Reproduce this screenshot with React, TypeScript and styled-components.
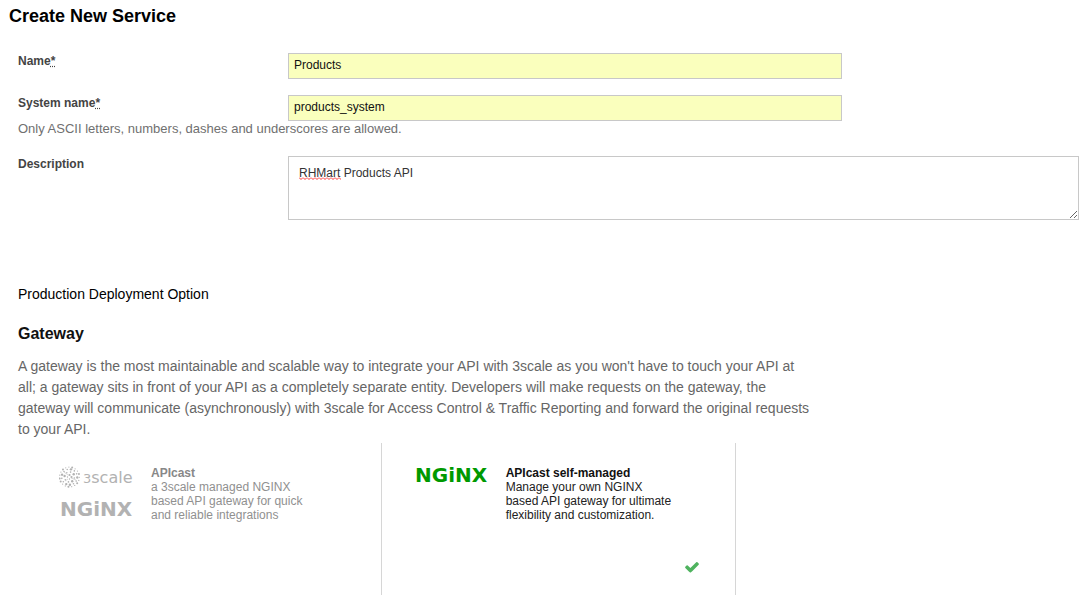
import React, { useState } from 'react';
import styled, { createGlobalStyle } from 'styled-components';

const GlobalStyle = createGlobalStyle`
  *, *::before, *::after { box-sizing: border-box; }
  body {
    margin: 0;
    background: #fff;
    color: #111;
    font-family: "Liberation Sans", Arial, Helvetica, sans-serif;
    font-size: 12px;
  }
`;

const Page = styled.main`
  padding: 4px 4px 20px 0;
`;

const Title = styled.h1`
  margin: 0 0 25px;
  padding-left: 9px;
  font-size: 18px;
  line-height: 24px;
  color: #000;
`;

const Form = styled.form`
  padding-left: 18px;
`;

const Field = styled.div<{ $gap: number }>`
  display: grid;
  grid-template-columns: 270px 1fr;
  align-items: start;
  margin-bottom: ${(p) => p.$gap}px;
`;

const FieldLabel = styled.label`
  font-weight: bold;
  line-height: 16px;
  color: #444;
`;

const Required = styled.abbr`
  text-decoration: underline dotted;
`;

const TextInput = styled.input`
  width: 70%;
  height: 26px;
  padding: 0 5px 2px;
  border: 1px solid #c8c8c8;
  border-radius: 0;
  background: #faffbd;
  color: #111;
  font: 12px "Liberation Sans", Arial, sans-serif;
`;

const Hint = styled.p`
  grid-column: 1 / -1;
  margin: 0;
  font-size: 13px;
  line-height: 16px;
  color: #707070;
`;

const AreaWrap = styled.div`
  position: relative;
`;

const TextArea = styled.textarea`
  display: block;
  width: 100%;
  height: 64px;
  padding: 8px 10px;
  border: 1px solid #c8c8c8;
  background: #fff;
  color: #333;
  font: 12px/16px "Liberation Sans", Arial, sans-serif;
  resize: vertical;
`;

const Squiggle = styled.svg`
  position: absolute;
  left: 11px;
  top: 21px;
  pointer-events: none;
`;

const Legend = styled.h2`
  margin: 0 0 20px;
  font-size: 14px;
  font-weight: normal;
  line-height: 20px;
  color: #000;
`;

const GroupTitle = styled.h3`
  margin: 0 0 12px;
  font-size: 16px;
  line-height: 20px;
`;

const Intro = styled.p`
  width: 75%;
  margin: 0 0 3px;
  font-size: 14px;
  line-height: 21px;
  color: #666;
`;

const Options = styled.div`
  display: grid;
  grid-template-columns: repeat(2, calc((100% + 12px) / 3));
  margin-left: 9px;
`;

const Option = styled.label`
  position: relative;
  display: grid;
  grid-template-columns: 76px 170px;
  column-gap: 16px;
  align-items: start;
  min-height: 152px;
  padding: 23px 0 0 32px;
  border-right: 1px solid #d6d6d6;
  cursor: pointer;
`;

const OptionRadio = styled.input`
  position: absolute;
  width: 1px;
  height: 1px;
  margin: 0;
  opacity: 0;
`;

const Logos = styled.span<{ $on: boolean }>`
  display: flex;
  flex-direction: column;
  gap: 12px;
  color: ${(p) => (p.$on ? '#009900' : '#b2b2b2')};
`;

const Wordmark = styled.svg`
  margin-top: -3px;
`;

const OptionText = styled.span<{ $on: boolean }>`
  line-height: 14px;
  color: ${(p) => (p.$on ? '#222' : '#909090')};

  strong {
    display: block;
    color: ${(p) => (p.$on ? '#111' : '#888')};
  }
`;

const Tick = styled.svg`
  position: absolute;
  right: 35px;
  bottom: 20px;
  width: 16px;
  height: 16px;
  fill: #4fb35f;
`;

const rings = [
  { radius: 2, count: 4, size: 0.7 },
  { radius: 5, count: 8, size: 0.8 },
  { radius: 7.8, count: 13, size: 0.8 },
  { radius: 9.9, count: 19, size: 0.6 },
];

function ThreeScaleLogo() {
  return (
    <svg width="76" height="22" viewBox="0 0 76 22" fill="currentColor" role="img" aria-label="3scale">
      {rings.map((ring, r) =>
        Array.from({ length: ring.count }, (_, i) => {
          const a = (i / ring.count) * Math.PI * 2 + r;
          return (
            <circle
              key={`${r}-${i}`}
              cx={10.5 + Math.cos(a) * ring.radius}
              cy={11 + Math.sin(a) * ring.radius}
              r={ring.size + (i % 3 === 0 ? 0.4 : 0)}
            />
          );
        }),
      )}
      <path d="M5 6L9 9M12 12L17 14M6 15L9 13" fill="none" stroke="currentColor" strokeWidth="0.5" />
      <text x="24" y="17" fontFamily="DejaVu Sans, sans-serif" fontSize="16">
        <tspan fontSize="13">3</tspan>scale
      </text>
    </svg>
  );
}

function NginxLogo() {
  return (
    <Wordmark width="76" height="24" viewBox="0 0 76 24" fill="currentColor" role="img" aria-label="NGINX">
      <text x="1" y="19" fontFamily="DejaVu Sans, sans-serif" fontWeight="bold" fontSize="20">
        NGiNX
      </text>
    </Wordmark>
  );
}

function CheckMark() {
  return (
    <Tick viewBox="0 0 1792 1792" aria-hidden="true">
      <path d="M1671 566q0 40-28 68l-724 724-136 136q-28 28-68 28t-68-28l-136-136-362-362q-28-28-28-68t28-68l136-136q28-28 68-28t68 28l294 295 656-657q28-28 68-28t68 28l136 136q28 28 28 68z" />
    </Tick>
  );
}

type Deployment = 'hosted' | 'self_managed';

export default function App() {
  const [deployment, setDeployment] = useState<Deployment>('self_managed');
  const hosted = deployment === 'hosted';

  return (
    <>
      <GlobalStyle />
      <Page>
        <Title>Create New Service</Title>
        <Form onSubmit={(e) => e.preventDefault()}>
          <Field $gap={16}>
            <FieldLabel htmlFor="name">
              Name<Required title="required">*</Required>
            </FieldLabel>
            <TextInput id="name" type="text" defaultValue="Products" required />
          </Field>
          <Field $gap={19}>
            <FieldLabel htmlFor="system">
              System name<Required title="required">*</Required>
            </FieldLabel>
            <TextInput id="system" type="text" defaultValue="products_system" required />
            <Hint>Only ASCII letters, numbers, dashes and underscores are allowed.</Hint>
          </Field>
          <Field $gap={64}>
            <FieldLabel htmlFor="description">Description</FieldLabel>
            <AreaWrap>
              <TextArea id="description" defaultValue="RHMart Products API" />
              <Squiggle width="42" height="3" aria-hidden="true">
                <defs>
                  <pattern id="wave" width="4" height="3" patternUnits="userSpaceOnUse">
                    <path d="M-1 0.5L0 0.5L2 2.5L4 0.5" stroke="#f33" fill="none" />
                  </pattern>
                </defs>
                <rect width="42" height="3" fill="url(#wave)" />
              </Squiggle>
            </AreaWrap>
          </Field>

          <Legend>Production Deployment Option</Legend>
          <GroupTitle>Gateway</GroupTitle>
          <Intro>
            A gateway is the most maintainable and scalable way to integrate your API with 3scale as you won't have to
            touch your API at all; a gateway sits in front of your API as a completely separate entity. Developers will
            make requests on the gateway, the gateway will communicate (asynchronously) with 3scale for Access Control
            &amp; Traffic Reporting and forward the original requests to your API.
          </Intro>
          <Options role="radiogroup" aria-label="Gateway">
            <Option>
              <OptionRadio type="radio" name="deployment" checked={hosted} onChange={() => setDeployment('hosted')} />
              <Logos $on={hosted}>
                <ThreeScaleLogo />
                <NginxLogo />
              </Logos>
              <OptionText $on={hosted}>
                <strong>APIcast</strong>a 3scale managed NGINX
                <br />
                based API gateway for quick
                <br />
                and reliable integrations
              </OptionText>
              {hosted && <CheckMark />}
            </Option>
            <Option>
              <OptionRadio
                type="radio"
                name="deployment"
                checked={!hosted}
                onChange={() => setDeployment('self_managed')}
              />
              <Logos $on={!hosted}>
                <NginxLogo />
              </Logos>
              <OptionText $on={!hosted}>
                <strong>APIcast self-managed</strong>Manage your own NGINX
                <br />
                based API gateway for ultimate
                <br />
                flexibility and customization.
              </OptionText>
              {!hosted && <CheckMark />}
            </Option>
          </Options>
        </Form>
      </Page>
    </>
  );
}
